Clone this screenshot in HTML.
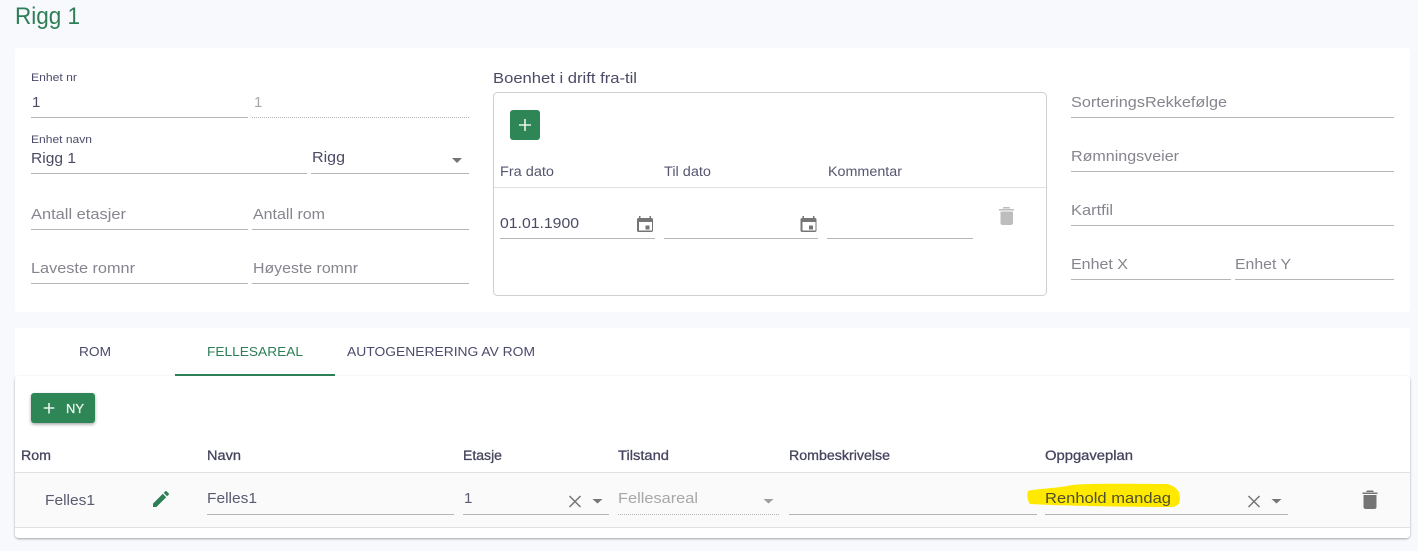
<!DOCTYPE html>
<html lang="no">
<head>
<meta charset="utf-8">
<title>Rigg 1</title>
<style>
html,body{margin:0;padding:0;background:#f7f9fd;width:1418px;height:551px;overflow:hidden}
svg{display:block}
text{font-family:"Liberation Sans",sans-serif;white-space:pre}
.l{font-size:11px;fill:#4b4b6b}
.ph{font-size:15px;fill:#85858e}
.v{font-size:15px;fill:#4b4b65}
.h{font-size:13.5px;fill:#55556f}
.th{font-size:13.5px;fill:#45455f;stroke:#45455f;stroke-width:.3}
.tab{font-size:13px;fill:#4b4b6b}
.u{stroke:#b5b5b5;stroke-width:1}
.d{stroke:#b5b5b5;stroke-width:1;stroke-dasharray:1 1}
</style>
</head>
<body>
<svg width="1418" height="551" viewBox="0 0 1418 551" xmlns="http://www.w3.org/2000/svg">
<defs>
<filter id="s" x="-5%" y="-5%" width="110%" height="115%"><feDropShadow dx="0" dy="1" stdDeviation="1" flood-color="#000" flood-opacity=".35"/></filter>
<filter id="b" x="-20%" y="-20%" width="140%" height="150%"><feDropShadow dx="0" dy="1.5" stdDeviation="1.5" flood-color="#000" flood-opacity=".35"/></filter>
</defs>
<rect width="1418" height="551" fill="#f7f9fd"/>
<text x="15" y="24" font-size="24" fill="#2e7f58" textLength="65" lengthAdjust="spacingAndGlyphs">Rigg 1</text>

<!-- top card -->
<rect x="15" y="48" width="1395" height="264" rx="3" fill="#fff"/>

<text class="l" x="31" y="81" textLength="46" lengthAdjust="spacingAndGlyphs">Enhet nr</text>
<text class="v" x="32" y="107">1</text>
<line class="u" x1="31" x2="248" y1="117.5" y2="117.5"/>
<text x="254" y="107" font-size="15" fill="#a8a8a8">1</text>
<line class="d" x1="252" x2="469" y1="117.5" y2="117.5"/>

<text class="l" x="31" y="143" textLength="61" lengthAdjust="spacingAndGlyphs">Enhet navn</text>
<text class="v" x="31" y="163" textLength="45" lengthAdjust="spacingAndGlyphs">Rigg 1</text>
<line class="u" x1="31" x2="307" y1="173.5" y2="173.5"/>
<text class="v" x="312" y="162" textLength="33" lengthAdjust="spacingAndGlyphs">Rigg</text>
<path d="M452 158h10l-5 5z" fill="#757575"/>
<line class="u" x1="311" x2="469" y1="173.5" y2="173.5"/>

<text class="ph" x="31" y="219" textLength="95" lengthAdjust="spacingAndGlyphs">Antall etasjer</text>
<line class="u" x1="31" x2="248" y1="229.5" y2="229.5"/>
<text class="ph" x="253" y="219" textLength="72" lengthAdjust="spacingAndGlyphs">Antall rom</text>
<line class="u" x1="252" x2="469" y1="229.5" y2="229.5"/>
<text class="ph" x="31" y="273" textLength="104" lengthAdjust="spacingAndGlyphs">Laveste romnr</text>
<line class="u" x1="31" x2="248" y1="283.5" y2="283.5"/>
<text class="ph" x="253" y="273" textLength="105" lengthAdjust="spacingAndGlyphs">Høyeste romnr</text>
<line class="u" x1="252" x2="469" y1="283.5" y2="283.5"/>

<!-- date box -->
<text x="493" y="83" font-size="15" fill="#4b4b65" textLength="144" lengthAdjust="spacingAndGlyphs">Boenhet i drift fra-til</text>
<rect x="493.5" y="92.5" width="553" height="203" rx="4" fill="#fff" stroke="#cfcfcf"/>
<rect x="510" y="110" width="30" height="30" rx="3" fill="#2e8555"/>
<path d="M525 119v12M519 125h12" stroke="#e9f3ed" stroke-width="1.600" fill="none"/>
<text class="h" x="500" y="176" textLength="54" lengthAdjust="spacingAndGlyphs">Fra dato</text>
<text class="h" x="664" y="176" textLength="47" lengthAdjust="spacingAndGlyphs">Til dato</text>
<text class="h" x="828" y="176" textLength="74" lengthAdjust="spacingAndGlyphs">Kommentar</text>
<line x1="494" x2="1046" y1="187.5" y2="187.5" stroke="#e0e0e0"/>
<text class="v" x="500" y="228" textLength="79" lengthAdjust="spacingAndGlyphs">01.01.1900</text>
<line class="u" x1="500" x2="655" y1="238.5" y2="238.5"/>
<line class="u" x1="664" x2="818" y1="238.5" y2="238.5"/>
<line class="u" x1="827" x2="973" y1="238.5" y2="238.5"/>
<g fill="#757575">
<path d="M652 218h-1v-2h-1.500v2h-9v-2H639v2h-.5c-.9 0-1.500.7-1.500 1.500v11c0 .8.7 1.500 1.500 1.500h13c.8 0 1.500-.7 1.500-1.500v-11c0-.8-.7-1.500-1.500-1.500zm0 12.500h-13V222h13zM645.500 225.500h4v4h-4z"/>
<path d="M652 218h-1v-2h-1.500v2h-9v-2H639v2h-.5c-.9 0-1.500.7-1.500 1.500v11c0 .8.7 1.500 1.500 1.500h13c.8 0 1.500-.7 1.500-1.500v-11c0-.8-.7-1.500-1.500-1.500zm0 12.500h-13V222h13zM645.500 225.500h4v4h-4z" transform="translate(163.500 0)"/>
</g>
<path d="M999 209h15v1.500h-15zM1003.500 207h6l1 1.500h-8zM1000.500 211.500h12.500v11.500c0 1.100-.9 2-2 2h-8.500c-1.100 0-2-.9-2-2z" fill="#bdbdbd"/>

<!-- right col -->
<text class="ph" x="1071" y="107" textLength="156" lengthAdjust="spacingAndGlyphs">SorteringsRekkefølge</text>
<line class="u" x1="1071" x2="1394" y1="117.5" y2="117.5"/>
<text class="ph" x="1071" y="161" textLength="108" lengthAdjust="spacingAndGlyphs">Rømningsveier</text>
<line class="u" x1="1071" x2="1394" y1="171.5" y2="171.5"/>
<text class="ph" x="1071" y="215" textLength="42" lengthAdjust="spacingAndGlyphs">Kartfil</text>
<line class="u" x1="1071" x2="1394" y1="225.5" y2="225.5"/>
<text class="ph" x="1071" y="269" textLength="57" lengthAdjust="spacingAndGlyphs">Enhet X</text>
<line class="u" x1="1071" x2="1231" y1="279.5" y2="279.5"/>
<text class="ph" x="1235" y="269" textLength="56" lengthAdjust="spacingAndGlyphs">Enhet Y</text>
<line class="u" x1="1235" x2="1394" y1="279.5" y2="279.5"/>

<!-- tabs -->
<rect x="15" y="328" width="1395" height="49" fill="#fff"/>
<text class="tab" x="79" y="356" textLength="32" lengthAdjust="spacingAndGlyphs">ROM</text>
<text class="tab" x="207" y="356" textLength="96" lengthAdjust="spacingAndGlyphs" style="fill:#2e7f58">FELLESAREAL</text>
<text class="tab" x="347" y="356" textLength="188" lengthAdjust="spacingAndGlyphs">AUTOGENERERING AV ROM</text>

<!-- table panel -->
<rect x="15" y="376" width="1395" height="162" rx="4" fill="#fff" filter="url(#s)"/>
<rect x="175" y="374" width="160" height="2" fill="#2e7f58"/>
<rect x="31" y="393" width="64" height="30" rx="3" fill="#2e8555" filter="url(#b)"/>
<path d="M49 403v10.500M43.700 408h10.600" stroke="#e9f3ed" stroke-width="1.600" fill="none"/>
<text x="66" y="413" font-size="13" fill="#e9f3ed" stroke="#e9f3ed" stroke-width=".3" textLength="18" lengthAdjust="spacingAndGlyphs">NY</text>

<text class="th" x="21" y="460" textLength="30" lengthAdjust="spacingAndGlyphs">Rom</text>
<text class="th" x="207" y="460" textLength="34" lengthAdjust="spacingAndGlyphs">Navn</text>
<text class="th" x="463" y="460" textLength="39" lengthAdjust="spacingAndGlyphs">Etasje</text>
<text class="th" x="618" y="460" textLength="51" lengthAdjust="spacingAndGlyphs">Tilstand</text>
<text class="th" x="789" y="460" textLength="101" lengthAdjust="spacingAndGlyphs">Rombeskrivelse</text>
<text class="th" x="1045" y="460" textLength="88" lengthAdjust="spacingAndGlyphs">Oppgaveplan</text>

<rect x="15" y="473" width="1395" height="54" fill="#fafafa"/>
<line x1="15" x2="1410" y1="472.500" y2="472.500" stroke="#e0e0e0"/>
<line x1="15" x2="1410" y1="527.500" y2="527.500" stroke="#e0e0e0"/>

<text class="v" x="45" y="505" textLength="50" lengthAdjust="spacingAndGlyphs" style="fill:#5a5a70">Felles1</text>
<path d="M153 503.600V507h3.400l9.800-9.800-3.400-3.400zM168.700 494.700c.4-.4.400-.9 0-1.300l-2.100-2.100c-.4-.4-.9-.4-1.300 0l-1.600 1.600 3.400 3.400z" fill="#2e7f58"/>
<text class="v" x="207" y="503" textLength="50" lengthAdjust="spacingAndGlyphs" style="fill:#5a5a70">Felles1</text>
<line class="u" x1="207" x2="454" y1="514.500" y2="514.500"/>
<text class="v" x="464" y="503" style="fill:#5a5a70">1</text>
<path d="M569.500 496l11 11M580.500 496l-11 11" stroke="#757575" stroke-width="1.500" fill="none"/>
<path d="M592.500 499h10l-5 4.500z" fill="#757575"/>
<line class="u" x1="463" x2="609" y1="514.500" y2="514.500"/>
<text x="618" y="503" font-size="15" fill="#a8a8a8" textLength="80" lengthAdjust="spacingAndGlyphs">Fellesareal</text>
<path d="M763.500 499h10l-5 4.500z" fill="#9e9e9e"/>
<line class="d" x1="618" x2="780" y1="514.500" y2="514.500"/>
<line class="u" x1="789" x2="1037" y1="514.500" y2="514.500"/>

<path d="M1028 491C1033 489 1060 488 1072 485C1090 483 1140 484 1167 484C1175 486 1180 490 1180 498C1180 504 1178 506 1172 507C1130 507 1070 506 1030 504C1027 500 1027 495 1028 491z" fill="#ffe900"/>
<text x="1045" y="503" font-size="15" fill="#4f4f2c" textLength="126" lengthAdjust="spacingAndGlyphs">Renhold mandag</text>
<line class="u" x1="1045" x2="1288" y1="514.500" y2="514.500"/>
<path d="M1248.500 496l11 11M1259.500 496l-11 11" stroke="#757575" stroke-width="1.500" fill="none"/>
<path d="M1271.500 499h10l-5 4.500z" fill="#757575"/>
<path d="M1362.500 492.500h15v1.500h-15zM1367 490.500h6l1 1.500h-8zM1363.500 495h13v12c0 1.100-.9 2-2 2h-9c-1.100 0-2-.9-2-2z" fill="#757575"/>
</svg>
</body>
</html>
